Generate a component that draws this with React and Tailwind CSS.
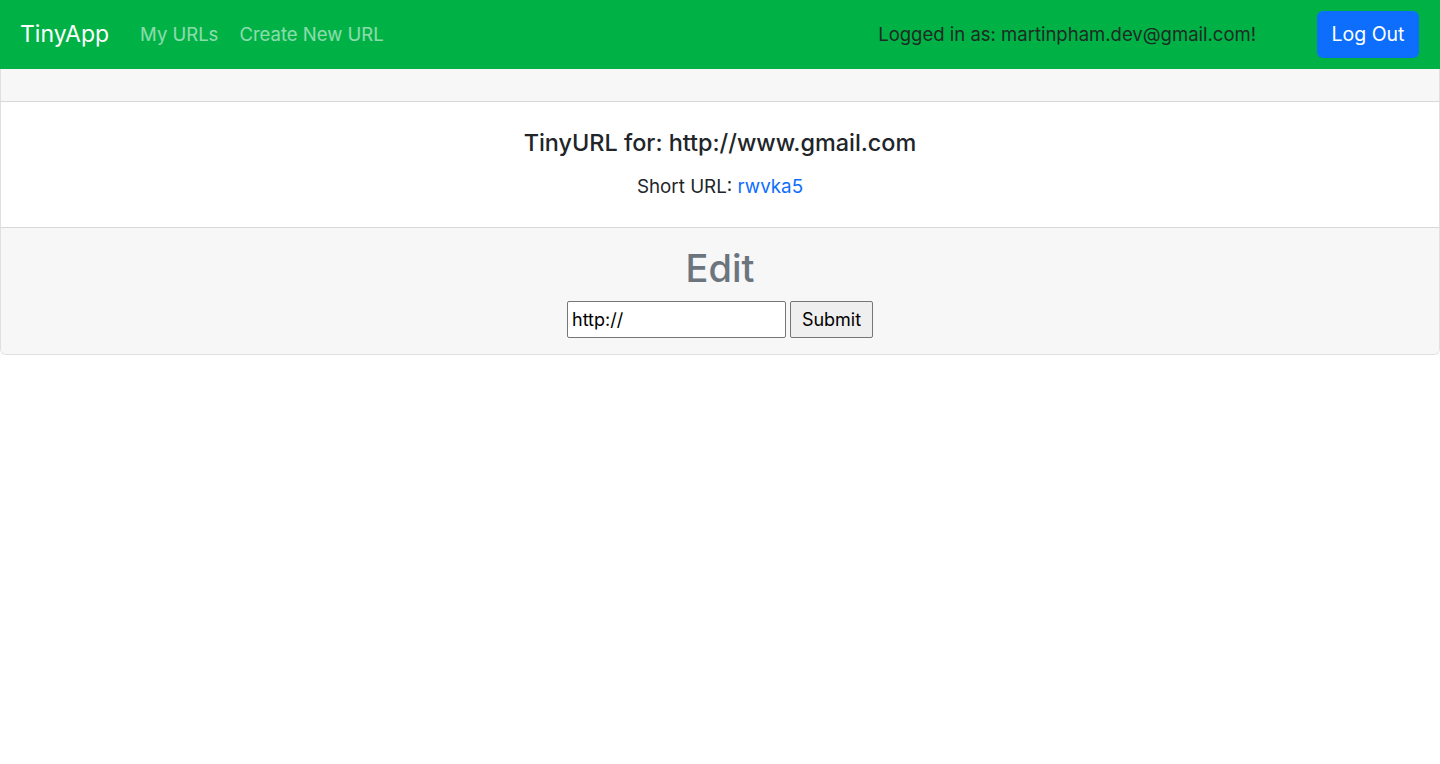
export default function App() {
  return (
    <div className="min-h-screen bg-white font-['Inter',sans-serif] text-[#212529]">
      <nav className="flex h-[69px] items-center bg-[#00b246] pl-[20px] pr-[21px]">
        <span className="text-[23px] leading-none text-white">TinyApp</span>
        <div className="ml-[31px] flex gap-[21px] text-[18.5px] text-white/55">
          <a href="#">My URLs</a>
          <a href="#">Create New URL</a>
        </div>
        <span className="ml-auto text-[18.5px] text-[#1d2b22]">Logged in as: martinpham.dev@gmail.com!</span>
        <button className="ml-[61px] h-[47px] w-[102px] rounded-[6px] bg-[#0d6efd] text-[19.5px] text-white">Log Out</button>
      </nav>

      <div className="rounded-b-[6px] border border-t-0 border-black/[.125]">
        <div className="h-[33px] border-b border-black/[.125] bg-[#f7f7f7]"></div>
        <div className="flex flex-col items-center pb-[27px] pt-[27px]">
          <h5 className="text-[23.4px] font-medium leading-[27px]">TinyURL for: http://www.gmail.com</h5>
          <p className="mt-[17px] text-[18.8px] leading-[27px]">
            Short URL: <a href="#" className="text-[#0d6efd]">rwvka5</a>
          </p>
        </div>
        <div className="flex flex-col items-center rounded-b-[6px] border-t border-black/[.125] bg-[#f7f7f7] pb-[16px] pt-[18px]">
          <h2 className="text-[38px] font-medium leading-[44px] text-[#6c757d]">Edit</h2>
          <form className="mt-[11px] flex gap-[4px]" onSubmit={(e) => e.preventDefault()}>
            <input
              defaultValue="http://"
              className="h-[37px] w-[219px] rounded-[2px] border border-[#767676] bg-white px-[4px] text-[18px] text-black outline-none"
            />
            <button className="h-[37px] w-[83px] rounded-[2px] border border-[#767676] bg-[#efefef] text-[18px] text-black">Submit</button>
          </form>
        </div>
      </div>
    </div>
  );
}
